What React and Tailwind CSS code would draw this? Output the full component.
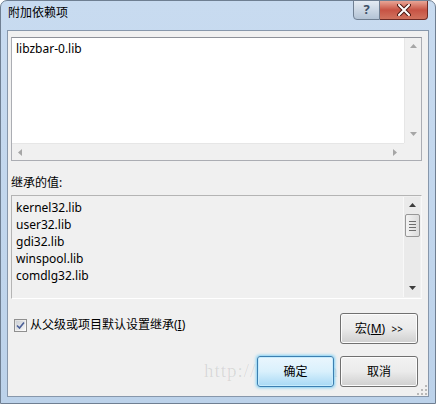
import React from "react";

const font = "font-['Noto_Sans','Noto_Sans_CJK_SC',sans-serif]";

function Arrow({ dir, color = "#7a7a7a" }) {
  const pts = {
    up: "1,6 4.5,2 8,6",
    down: "1,2 4.5,6 8,2",
    left: "6,1 2,4.5 6,8",
    right: "2,1 6,4.5 2,8",
  }[dir];
  return (
    <svg width="9" height="9" viewBox="0 0 9 9">
      <polygon points={pts} fill={color} />
    </svg>
  );
}

function WinButton({ children, primary }) {
  return (
    <button
      className={
        primary
          ? "relative z-10 w-[77px] h-[31px] rounded-[3px] border border-[#3c7fb1] bg-gradient-to-b from-[#eaf6fd] via-[#d9f0fc] to-[#a7d9f5] shadow-[0_0_3px_1px_#7fd0f5,inset_0_0_0_1px_#c7ecfd] text-[12px] text-black"
          : "relative z-10 w-[78px] h-[31px] rounded-[3px] border border-[#707070] bg-gradient-to-b from-[#f2f2f2] via-[#ebebeb] to-[#cfcfcf] shadow-[inset_0_0_0_1px_#fcfcfc] text-[12px] text-black"
      }
    >
      {children}
    </button>
  );
}

export default function App() {
  const inherited = ["kernel32.lib", "user32.lib", "gdi32.lib", "winspool.lib", "comdlg32.lib"];
  return (
    <div className={`${font} w-[436px] h-[404px] relative overflow-hidden rounded-t-[7px] border border-[#6f7f92] bg-gradient-to-b from-[#c8dbf0] to-[#bcd2ea] flex flex-col`}>
      {/* title bar */}
      <div className="h-[29px] flex items-start justify-between shrink-0">
        <span className="ml-[7px] mt-[3px] text-[12px] text-black">附加依赖项</span>
        <div className="flex mr-[7px] -mt-px">
          <div className="w-[27px] h-[20px] rounded-bl-[4px] border border-[#6f7f92] bg-gradient-to-b from-[#e4ebf3] to-[#b3c3d5] flex items-center justify-center text-[13px] font-bold text-[#3d4f66]">
            ?
          </div>
          <div className="w-[48px] h-[20px] rounded-br-[4px] border border-l-0 border-[#6f2b25] bg-gradient-to-b from-[#e8a596] via-[#c75344] to-[#d0725e] flex items-center justify-center">
            <svg width="14" height="12" viewBox="0 0 14 12">
              <path d="M2 1 L12 11 M12 1 L2 11" stroke="#4a1a14" strokeWidth="4" strokeLinecap="round" />
              <path d="M2 1 L12 11 M12 1 L2 11" stroke="#ffffff" strokeWidth="2" strokeLinecap="round" />
            </svg>
          </div>
        </div>
      </div>

      {/* client area */}
      <div className="mx-[6px] mb-[6px] flex-1 border border-[#8797ab] bg-[#f0f0f0] flex flex-col pl-[3px] pr-[6px] pt-[6px] relative">
        {/* watermark */}
        <div className="absolute left-[196px] top-[326px] font-['Liberation_Serif',serif] text-[19px] tracking-[1px] text-black/10 pointer-events-none">
          http://blog.csdn.net/
        </div>

        {/* editable box */}
        <div className="h-[124px] border border-[#abadb3] border-t-[#8e9199] bg-white grid grid-cols-[1fr_17px] grid-rows-[1fr_17px]">
          <div className="pl-[4px] pt-[2px] text-[12px] text-black leading-[17px]">libzbar-0.lib</div>
          <div className="bg-[#f0f0f0] border-l border-[#e6e6e6] flex flex-col items-center justify-between py-[4px]">
            <Arrow dir="up" color="#a6a6a6" />
            <Arrow dir="down" color="#a6a6a6" />
          </div>
          <div className="bg-[#f0f0f0] border-t border-[#e6e6e6] flex items-center justify-between px-[4px]">
            <Arrow dir="left" color="#a6a6a6" />
            <Arrow dir="right" color="#a6a6a6" />
          </div>
          <div className="bg-[#f0f0f0]" />
        </div>

        <div className="mt-[13px] text-[12px] text-black leading-[17px]">继承的值:</div>

        {/* inherited list */}
        <div className="mt-[4px] h-[104px] border border-[#b4b4b4] border-b-white border-r-[#f8f8f8] bg-[#f0f0f0] flex">
          <div className="flex-1 pl-[4px] pt-[3px] text-[12px] text-black leading-[17px]">
            {inherited.map((l) => (
              <div key={l}>{l}</div>
            ))}
          </div>
          <div className="w-[17px] my-[1px] mr-[1px] bg-[#eaeaea] border-l border-[#f8f8f8] flex flex-col items-center">
            <div className="h-[17px] flex items-center justify-center">
              <Arrow dir="up" color="#3c3c3c" />
            </div>
            <div className="w-[15px] h-[23px] rounded-[2px] border border-[#979797] bg-gradient-to-r from-[#f3f3f3] to-[#dcdcdc] flex flex-col items-center justify-center gap-[2px]">
              <div className="w-[7px] h-px bg-[#6e6e6e]" />
              <div className="w-[7px] h-px bg-[#6e6e6e]" />
              <div className="w-[7px] h-px bg-[#6e6e6e]" />
              <div className="w-[7px] h-px bg-[#6e6e6e]" />
            </div>
            <div className="flex-1" />
            <div className="h-[17px] flex items-center justify-center">
              <Arrow dir="down" color="#3c3c3c" />
            </div>
          </div>
        </div>

        {/* checkbox + macro */}
        <div className="mt-[14px] mr-[4px] flex items-start justify-between">
          <label className="flex items-center gap-[3px] ml-[3px] mt-[3px] text-[12px] text-black">
            <span className="w-[13px] h-[13px] border border-[#8f8f8f] bg-gradient-to-br from-[#dcdcdc] to-[#ffffff] flex items-center justify-center p-px">
              <span className="w-full h-full bg-gradient-to-br from-[#cbcfd5] to-[#f6f6f6] flex items-center justify-center">
                <svg width="9" height="9" viewBox="0 0 9 9">
                  <path d="M1 4.5 L3.5 7 L8 1.5" stroke="#4a5f97" strokeWidth="1.6" fill="none" />
                </svg>
              </span>
            </span>
            <span>
              从父级或项目默认设置继承(<span className="underline">I</span>)
            </span>
          </label>
          <WinButton>
            宏(<span className="underline">M</span>)&nbsp;&nbsp;<span className="text-[10px]">&gt;&gt;</span>
          </WinButton>
        </div>

        <div className="mt-[12px] mr-[4px] flex justify-end gap-[6px]">
          <WinButton primary>确定</WinButton>
          <WinButton>取消</WinButton>
        </div>

        {/* resize grip */}
        <svg className="absolute right-[1px] bottom-[1px]" width="11" height="11" viewBox="0 0 11 11">
          {[[9, 1], [9, 5], [5, 5], [9, 9], [5, 9], [1, 9]].map(([x, y]) => (
            <rect key={`${x}-${y}`} x={x} y={y} width="2" height="2" fill="#b8b8b8" />
          ))}
        </svg>
      </div>
    </div>
  );
}
